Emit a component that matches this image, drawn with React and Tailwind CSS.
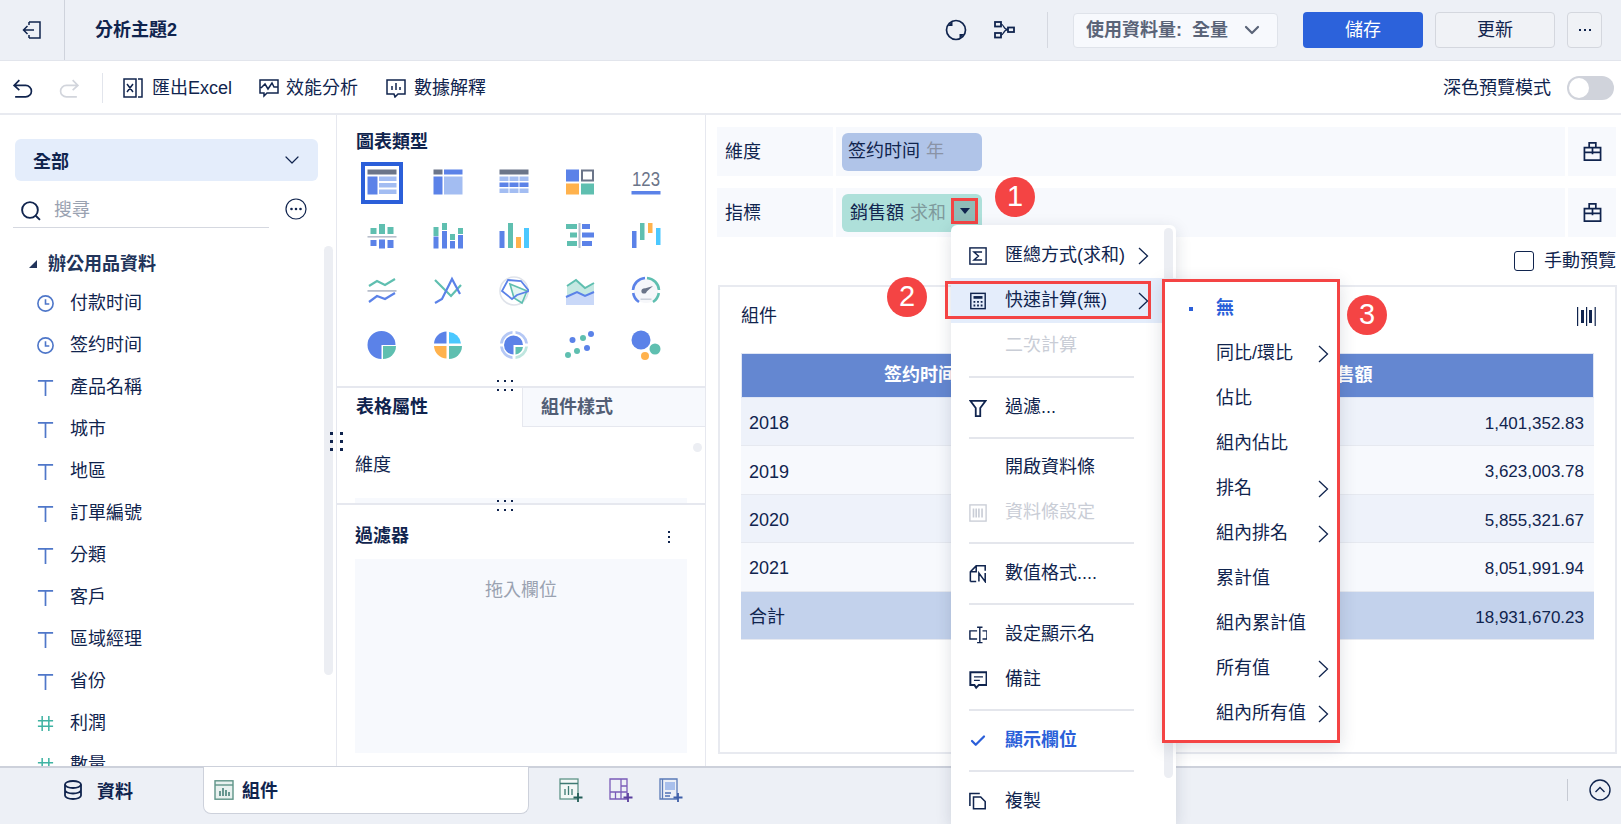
import { ChevronDown, Check } from 'lucide-react';

const B = '#5b82e8', T = '#5fbfb0', O = '#ffb24d', C = '#4bc8ff', G = '#6b7589', L = '#a3bdf2';

function R({ x, y, w, h, f }) {
  return <rect x={x} y={y} width={w} height={h} fill={f} />;
}

const chartIcons = [
  <><R x={0.5} y={1.5} w={29} h={5} f={G} /><R x={0.5} y={8.5} w={10} h={18} f={B} /><R x={12} y={8.5} w={17.5} h={4.5} f={L} /><R x={12} y={15} w={17.5} h={4.5} f={L} /><R x={12} y={21.5} w={17.5} h={4.5} f={L} /></>,
  <><R x={0.5} y={1.5} w={9} h={5} f={G} /><R x={11} y={1.5} w={18.5} h={5} f={B} /><R x={0.5} y={8.5} w={9} h={18} f={B} /><R x={11} y={8.5} w={18.5} h={18} f={L} /></>,
  <><R x={0.5} y={1.5} w={29} h={5} f={G} />{[8.5, 14.5, 20.5].map((y, i) => [0.5, 10.5, 20.5].map((x) => <R key={x + '-' + y} x={x} y={y} w={9} h={4.5} f={i === 1 ? B : L} />))}</>,
  <><R x={1} y={1.5} w={13} h={12} f={B} /><rect x={17} y={2.5} width={11} height={10} fill="none" stroke={G} strokeWidth="2" /><R x={1} y={15.5} w={13} h={11} f={O} /><R x={16} y={15.5} w={13} h={11} f={T} /></>,
  <><text x="1" y="18" textLength="28" lengthAdjust="spacingAndGlyphs" fontSize="21" fill={G} fontFamily="Liberation Sans, sans-serif">123</text><R x={0.5} y={23} w={29} h={3.5} f={B} /></>,
  <><R x={0.5} y={14} w={29} h={1.6} f="#b8bfcc" /><R x={3.5} y={6} w={6} h={6} f={T} /><R x={12} y={2} w={6} h={10} f={T} /><R x={20.5} y={5} w={6} h={7} f={T} /><R x={3.5} y={18} w={6} h={6} f={B} /><R x={12} y={17.5} w={6} h={9} f={B} /><R x={20.5} y={18} w={6} h={8} f={B} /></>,
  <><R x={0.5} y={5} w={5} h={9} f={T} /><R x={0.5} y={14.5} w={5} h={12} f={B} /><R x={9} y={1} w={5} h={7} f={T} /><R x={9} y={9} w={5} h={17.5} f={B} /><R x={17} y={12} w={5} h={6} f={T} /><R x={17} y={19} w={5} h={7.5} f={B} /><R x={25} y={6} w={5} h={6} f={T} /><R x={25} y={13} w={5} h={13.5} f={B} /></>,
  <><R x={0.5} y={9} w={5} h={17} f={B} /><R x={9} y={1} w={5} h={25} f={T} /><R x={17} y={15} w={5} h={11} f={O} /><R x={25} y={6} w={5} h={20} f={C} /></>,
  <><R x={13.5} y={1} w={2} h={25} f="#b8bfcc" /><R x={1} y={2} w={11} h={5} f={T} /><R x={5} y={10.5} w={7} h={5} f={T} /><R x={2} y={19} w={10} h={5} f={T} /><R x={17} y={2} w={8} h={5} f={B} /><R x={17} y={10.5} w={12} h={5} f={B} /><R x={17} y={19} w={10} h={5} f={B} /></>,
  <><R x={1} y={9} w={4.5} h={17} f={B} /><R x={9} y={1} w={4.5} h={17} f={T} /><R x={17} y={1} w={4.5} h={10} f={O} /><R x={25} y={6} w={4.5} h={17} f={C} /></>,
  <><path d="M2 10 L10 5 L18 9 L28 3" fill="none" stroke={T} strokeWidth="2.2" /><R x={0.5} y={14} w={29} h={1.8} f="#b8bfcc" /><path d="M2 26 L10 20 L18 23 L28 17" fill="none" stroke={B} strokeWidth="2.2" /></>,
  <><path d="M2 4 L18 20 L28 9" fill="none" stroke={T} strokeWidth="2.2" /><path d="M2 27 L9 23 L19 3 L27 18" fill="none" stroke={B} strokeWidth="2.2" /></>,
  <><circle cx="15" cy="15" r="14" fill="none" stroke="#dfe3ea" strokeWidth="1.6" /><path d="M11 8 L28 15 L23 27 L15 22 Z" fill="#e3f5f2" stroke={T} strokeWidth="1.6" /><path d="M9 4 L22 5 L30 15 L18 19 L13 23 L3 15 Z" fill="none" stroke={B} strokeWidth="1.8" /></>,
  <><path d="M2 10 L11 4 L20 12 L29 7 V16 L20 20 L12 16 L2 21 Z" fill="#c5e8e2" /><path d="M1 21 L12 16 L20 20 L29 16 V29 H1 Z" fill="#c9d8f8" /><path d="M2 10 L11 4 L20 12 L29 7" fill="none" stroke={T} strokeWidth="2" /><path d="M1 21 L12 16 L20 20 L29 16" fill="none" stroke={B} strokeWidth="2" /></>,
  <><circle cx="15" cy="15" r="12" fill="#f6f7fa" /><path d="M2 14 A13 13 0 0 1 14 2" fill="none" stroke={B} strokeWidth="2.6" /><path d="M16 2 A13 13 0 0 1 28 14" fill="none" stroke={T} strokeWidth="2.6" /><path d="M2.2 17 A13 13 0 0 0 8 26" fill="none" stroke={B} strokeWidth="2.6" /><path d="M27.8 17 A13 13 0 0 1 22 26" fill="none" stroke={T} strokeWidth="2.6" /><circle cx="13" cy="15" r="2.6" fill={G} /><path d="M12 13 L22 10 L14 17 Z" fill={G} /><R x={9.5} y={22.5} w={11} h={1.4} f="#c7ccd6" /></>,
  <><path d="M14 14 L28 14 A14 14 0 1 0 14 28 Z" fill={B} transform="translate(0.5 1)" /><path d="M16 16 H29 A13 13 0 0 1 16 29 Z" fill={T} /></>,
  <><path d="M13.5 1.5 A13 13 0 0 0 1 13.5 H13.5 Z" fill={B} /><path d="M16 2 A13 13 0 0 1 28 13.5 H16 Z" fill={C} /><path d="M1 16 H13.5 V28.5 A13 13 0 0 1 1 16 Z" fill={O} /><path d="M16 16 H29 A13 13 0 0 1 16 29 Z" fill={T} /></>,
  <><path d="M13.5 1 A14 14 0 0 0 1 13.5 H3.8 A11.2 11.2 0 0 1 13.5 3.8 Z M16.5 1 A14 14 0 0 1 29 13.5 H26.2 A11.2 11.2 0 0 0 16.5 3.8 Z M1 16.5 A14 14 0 0 0 13.5 29 V26.2 A11.2 11.2 0 0 1 3.8 16.5 Z" fill="#b5c8f5" /><path d="M16.5 29 A14 14 0 0 0 29 16.5 H26.2 A11.2 11.2 0 0 1 16.5 26.2 Z" fill="#bfe6df" /><path d="M14.5 15 H24 A9.5 9.5 0 1 0 14.5 24.5 Z" fill={B} /><path d="M16.5 17 H24 A8.5 8.5 0 0 1 16.5 24.5 Z" fill={T} /></>,
  <><circle cx="26" cy="4" r="3" fill={B} /><circle cx="18" cy="8" r="3" fill={T} /><circle cx="7.5" cy="10" r="3" fill={B} /><circle cx="22" cy="18" r="3" fill={B} /><circle cx="12" cy="21" r="3" fill={T} /><circle cx="3" cy="25" r="3" fill={T} /></>,
  <><circle cx="10" cy="10" r="9.5" fill={B} /><circle cx="24" cy="19" r="5.5" fill={T} /><circle cx="14" cy="26" r="4" fill={O} /></>,
];

function Outline({ size = 20, className = '', children, vb = '0 0 20 20', w = 1.5 }) {
  return (
    <svg width={size} height={size} viewBox={vb} fill="none" stroke="currentColor" strokeWidth={w} className={className}>
      {children}
    </svg>
  );
}

function Arrow({ className }) {
  return (
    <svg width="11" height="18" viewBox="0 0 11 18" fill="none" stroke="currentColor" strokeWidth="1.3" className={className}>
      <path d="M1 1 L9.5 9 L1 17" />
    </svg>
  );
}

function StructureIcon() {
  return (
    <svg width="21" height="18" viewBox="0 0 21 18" fill="none" stroke="currentColor" strokeWidth="1.8">
      <rect x="1" y="1" width="6" height="4.5" />
      <rect x="1" y="12" width="6" height="4.5" />
      <rect x="14" y="6.5" width="6" height="4.5" />
      <path d="M7 3 C10 3 9 8.7 14 8.7 C9 8.7 10 14 7 14" strokeWidth="1.2" />
    </svg>
  );
}

function TypeIcon({ kind }) {
  if (kind === 'clock') {
    return (
      <Outline size={19} className="text-[#4f77c9]" w={1.7}>
        <circle cx="10" cy="10" r="8" />
        <path d="M10 5.5 V10.5 H14" />
      </Outline>
    );
  }
  if (kind === 'text') {
    return (
      <Outline size={19} className="text-[#4f77c9]" w={1.8}>
        <path d="M2 3 H18 M10 3 V19" />
      </Outline>
    );
  }
  return (
    <Outline size={19} className="text-[#3fb3a3]" w={1.6}>
      <path d="M6.5 2 V18 M13.5 2 V18 M2 7 H18 M2 13 H18" />
    </Outline>
  );
}

const fields = [
  ['clock', '付款时间'], ['clock', '签约时间'], ['text', '產品名稱'], ['text', '城市'], ['text', '地區'], ['text', '訂單編號'],
  ['text', '分類'], ['text', '客戶'], ['text', '區域經理'], ['text', '省份'], ['num', '利潤'], ['num', '數量'],
];

function Sidebar() {
  return (
    <aside className="relative w-[337px] flex-none border-r border-[#e6e8ef] overflow-hidden pt-6">
      <div className="mx-[15px] h-[42px] w-[303px] rounded-md bg-[#e4edfb] flex items-center justify-between pl-[18px] pr-[14px]">
        <span className="font-bold pt-1">全部</span>
        <ChevronDown size={24} strokeWidth={1.2} />
      </div>
      <div className="flex items-center mt-[9px] pl-[13px]">
        <div className="flex items-center h-[38px] w-[256px] border-b border-[#d5d8e0] pl-[7px] pt-1">
          <Outline size={21} w={1.8}>
            <circle cx="9.5" cy="9.5" r="7.5" />
            <path d="M15 15 L19 19" />
          </Outline>
          <span className="ml-[13px] text-[#9aa2b1]">搜尋</span>
        </div>
        <svg width="22" height="22" viewBox="0 0 22 22" className="ml-[16px]" fill="none" stroke="currentColor" strokeWidth="1.2">
          <circle cx="11" cy="11" r="10" />
          <circle cx="6.5" cy="11" r="0.7" fill="currentColor" />
          <circle cx="11" cy="11" r="0.7" fill="currentColor" />
          <circle cx="15.5" cy="11" r="0.7" fill="currentColor" />
        </svg>
      </div>
      <div className="flex items-center h-9 mt-[18px] pl-[29px] font-bold text-[#22345a]">
        <span className="w-0 h-0 border-l-[8px] border-l-transparent border-b-[8px] border-b-[#22345a]" />
        <span className="ml-[11px]">辦公用品資料</span>
      </div>
      {fields.map(([kind, name]) => (
        <div key={name} className="flex items-center h-[42px] pl-[36px]">
          <TypeIcon kind={kind} />
          <span className="ml-[15px]">{name}</span>
        </div>
      ))}
      <div className="absolute left-[324px] top-[131px] w-[9px] h-[429px] rounded-md bg-[#eceef3]" />
    </aside>
  );
}

function GripDots({ className }) {
  return (
    <div className={'absolute grid grid-cols-3 gap-x-[5px] gap-y-[7px] ' + className}>
      {[0, 1, 2, 3, 4, 5].map((i) => <span key={i} className="block w-[2px] h-[2px] bg-[#10244e]" />)}
    </div>
  );
}

function MiddlePanel() {
  return (
    <section className="relative w-[369px] flex-none border-r border-[#e6e8ef] flex flex-col">
      <div className="h-[271px] flex-none">
        <h3 className="font-bold text-[#10244e] h-6 mt-[15px] ml-[19px] leading-6">圖表類型</h3>
        <div className="grid grid-cols-[repeat(5,66px)] auto-rows-[54px] mt-[2px] ml-[12px]">
          {chartIcons.map((icon, i) => (
            <div key={i} className="flex items-center justify-center">
              <div className={i === 0 ? 'w-[42px] h-[42px] border-4 border-[#2b5fd9] flex items-center justify-center' : 'flex items-center justify-center'}>
                <svg width="30" height="30" viewBox="0 0 30 30">{icon}</svg>
              </div>
            </div>
          ))}
        </div>
      </div>
      <div className="flex h-[41px] flex-none border-t-2 border-[#e6e8ef]">
        <div className="w-[185px] pl-[19px] flex items-center font-bold">表格屬性</div>
        <div className="flex-1 pl-[18px] flex items-center font-bold text-[#525e75] bg-[#f7f9fd] border-l border-b border-[#e6e8ef]">組件樣式</div>
      </div>
      <div className="relative h-[78px] flex-none px-[18px] border-b-2 border-[#e6e8ef]">
        <div className="pt-[26px] leading-6">維度</div>
        <div className="absolute left-[18px] right-[18px] bottom-0 h-[5px] bg-[#f7f9fd]" />
        <div className="absolute right-[3px] top-[16px] w-[9px] h-[9px] rounded-full bg-[#eceef3]" />
      </div>
      <div className="px-[18px] flex-1">
        <div className="flex items-center justify-between h-[54px] pt-[9px]">
          <span className="font-bold">過濾器</span>
          <span className="flex flex-col gap-[3px] mr-[17px]">
            {[0, 1, 2].map((i) => <span key={i} className="block w-[2px] h-[2px] bg-[#10244e]" />)}
          </span>
        </div>
        <div className="h-[194px] bg-[#f7f9fd] text-[#9aa2b1] text-center pt-[19px] leading-6">拖入欄位</div>
      </div>
      <GripDots className="left-[160px] top-[265px]" />
      <GripDots className="left-[160px] top-[385px]" />
    </section>
  );
}

function ShelfRow({ label, children }) {
  return (
    <div className="flex h-[49px] gap-[3px] pl-[11px] pr-[5px]">
      <div className="w-[116px] bg-[#f7f9fd] flex items-center pl-2 pt-[2px]">{label}</div>
      <div className="flex-1 bg-[#f7f9fd] flex items-center pl-[6px]">{children}</div>
      <div className="w-[48px] bg-[#f7f9fd] flex items-center justify-center">
        <Outline size={19} w={1.8}>
          <path d="M6.5 6 V1 H13.5 V6 M1.5 6 H18.5 V19 H1.5 Z M10 6 V13 M1.5 11 H18.5" />
        </Outline>
      </div>
    </div>
  );
}

const rows = [
  ['2018', '1,401,352.83', 'bg-[#eef2fa]'],
  ['2019', '3,623,003.78', 'bg-[#f7f9fd]'],
  ['2020', '5,855,321.67', 'bg-[#eef2fa]'],
  ['2021', '8,051,991.94', 'bg-[#f7f9fd]'],
  ['合計', '18,931,670.23', 'bg-[#c3d2ec]'],
];

function RightPanel() {
  return (
    <section className="flex-1 min-w-0 pt-3">
      <ShelfRow label="維度">
        <div className="w-[140px] h-[38px] rounded-md bg-[#b0c4e8] flex items-center pl-[6px]">
          签约时间<span className="ml-[6px] text-[#8a93a6]">年</span>
        </div>
      </ShelfRow>
      <div className="h-3" />
      <ShelfRow label="指標">
        <div className="w-[140px] h-[38px] rounded-md bg-[#aee0da] flex items-center pl-2 pt-[2px]">
          銷售額<span className="ml-[6px] text-[#7f9a9c]">求和</span>
        </div>
      </ShelfRow>
      <div className="flex items-center justify-end h-[48px] pr-[5px]">
        <span className="w-5 h-5 rounded-[3px] border border-[#10244e]" />
        <span className="ml-[10px]">手動預覽</span>
      </div>
      <div className="ml-3 mr-1 h-[469px] border-2 border-[#e8eaf0] px-[21px]">
        <div className="h-[66px] pb-2 flex items-center justify-between">
          <span>組件</span>
          <svg width="19" height="19" viewBox="0 0 19 19" fill="currentColor" className="mr-[-2px]">
            <rect x="0" y="0" width="1.2" height="19" />
            <rect x="4" y="3" width="3" height="13" />
            <rect x="9" y="0" width="1.2" height="19" />
            <rect x="12" y="3" width="3" height="13" />
            <rect x="17.6" y="0" width="1.2" height="19" />
          </svg>
        </div>
        <div className="grid grid-cols-[356px_1fr] h-[45px] bg-[#6487d1] text-white font-bold border border-[#dfe6f5]">
          <div className="flex items-center justify-center">签约时间</div>
          <div className="flex items-center justify-center">銷售額</div>
        </div>
        {rows.map(([year, value, bg]) => (
          <div key={year} className={'grid grid-cols-[356px_1fr] h-[48.4px] border-b border-[#e6e9f0] ' + bg}>
            <div className="flex items-center pl-2 pt-1">{year}</div>
            <div className="flex items-center justify-end pr-[10px] pt-1 text-[17px]">{value}</div>
          </div>
        ))}
      </div>
    </section>
  );
}

function MenuRow({ icon, label, arrow, muted, active, blue }) {
  return (
    <div className={'flex items-center h-[45px] pl-[18px] ' + (active ? 'bg-[#e4edfb] ' : '') + (muted ? 'text-[#c9cdd6] ' : '') + (blue ? 'text-[#2b5fd9] font-bold ' : '')}>
      <span className="w-[18px] h-[20px] flex items-center justify-center">{icon}</span>
      <span className="ml-[18px]">{label}</span>
      {arrow && <Arrow className="absolute left-[187px]" />}
    </div>
  );
}

function Sep({ h }) {
  return (
    <div className={'flex items-center pl-[18px] pr-[42px] ' + h}>
      <div className="w-full h-[2px] bg-[#e4e6ec]" />
    </div>
  );
}

function Menu() {
  return (
    <div className="absolute left-[951px] top-[225px] w-[225px] h-[599px] rounded-t-md bg-white shadow-[0_4px_16px_rgba(30,40,70,0.15)] pt-2 overflow-hidden">
      <MenuRow label="匯總方式(求和)" arrow icon={
        <Outline size={18} w={1.6}>
          <rect x="1" y="1" width="18" height="18" />
          <path d="M14.5 5.5 H5.5 L10.5 10 L5.5 14.5 H14.5" />
        </Outline>
      } />
      <MenuRow label="快速計算(無)" arrow active icon={
        <Outline size={18} w={1.6}>
          <rect x="2" y="1.5" width="16" height="17" />
          <path d="M5 6 H15" strokeWidth="3" />
          <path d="M5 11 H7 M9 11 H11 M13 11 H15 M5 15 H7 M9 15 H11 M13 15 H15" strokeWidth="2" />
        </Outline>
      } />
      <MenuRow label="二次計算" muted />
      <Sep h="h-[17px]" />
      <MenuRow label="過濾..." icon={
        <Outline size={18} w={2}>
          <path d="M1.5 2 H18.5 L12.5 10 V19 H7.5 V10 Z" />
        </Outline>
      } />
      <Sep h="h-[15px]" />
      <MenuRow label="開啟資料條" />
      <MenuRow label="資料條設定" muted icon={
        <Outline size={18}>
          <rect x="1" y="1" width="18" height="18" />
          <path d="M5 5 V15 M8 5 V15 M11 5 V15 M14.5 5 V15" strokeWidth="1.8" />
        </Outline>
      } />
      <Sep h="h-4" />
      <MenuRow label="數值格式...." icon={
        <Outline size={19} w={1.7}>
          <path d="M1.5 19 V8 L8 1.5 H18 V7 M1.5 19 H8 M8 1.5 V8 H1.5 M11 19 V9.5 L18 19 V9.5" />
        </Outline>
      } />
      <Sep h="h-4" />
      <MenuRow label="設定顯示名" icon={
        <Outline size={21} w={1.6}>
          <path d="M9 6 H1 V15 H9 M12 2 V19 M9 2 H15 M9 19 H15 M15 6 H20 V15 H15" />
        </Outline>
      } />
      <MenuRow label="備註" icon={
        <Outline size={21} w={2.2}>
          <path d="M1.5 2 H19.5 V16 H11 L8 19 L6 16 H1.5 Z" />
          <path d="M5.5 7 H15.5 M5.5 11 H12" strokeWidth="1.4" />
        </Outline>
      } />
      <Sep h="h-4" />
      <MenuRow label="顯示欄位" blue icon={<Check size={24} strokeWidth={3} />} />
      <Sep h="h-4" />
      <MenuRow label="複製" icon={
        <Outline size={19} w={1.7}>
          <path d="M1 15 V1 H12 M5 5 H13 L18 10 V18 H5 Z" />
        </Outline>
      } />
      <div className="absolute left-[213px] top-[3px] w-[9px] h-[550px] rounded-md bg-[#eceef3]" />
    </div>
  );
}

const subItems = [
  ['同比/環比', true], ['佔比', false], ['組內佔比', false], ['排名', true], ['組內排名', true],
  ['累計值', false], ['組內累計值', false], ['所有值', true], ['組內所有值', true],
];

function SubMenu() {
  return (
    <div className="absolute left-[1162px] top-[279px] w-[178px] h-[464px] bg-white border-[3px] border-[#f44444] shadow-[0_4px_16px_rgba(30,40,70,0.15)] pt-[4px]">
      <div className="flex items-center h-[45px] pl-[24px] text-[#2b5fd9] font-bold">
        <span className="w-1 h-1 bg-[#2b5fd9]" />
        <span className="ml-[23px]">無</span>
      </div>
      {subItems.map(([label, arrow]) => (
        <div key={label} className="relative flex items-center h-[45px] pl-[51px]">
          {label}
          {arrow && <Arrow className="absolute left-[153px]" />}
        </div>
      ))}
    </div>
  );
}

function Badge({ n, className }) {
  return (
    <div className={'absolute w-10 h-10 rounded-full bg-[#f44444] text-white flex items-center justify-center text-[29px] ' + className}>{n}</div>
  );
}

function BottomBar() {
  return (
    <footer className="relative h-[58px] flex-none bg-[#edf0f6] border-t-2 border-[#cdd1db] flex items-start">
      <div className="w-[203px] h-[44px] flex items-center pl-[63px] font-bold">
        <Outline size={20} w={1.8}>
          <ellipse cx="10" cy="4.5" rx="8" ry="3.5" />
          <path d="M2 4.5 V15.5 C2 17.5 5.5 19 10 19 C14.5 19 18 17.5 18 15.5 V4.5 M2 10 C2 12 5.5 13.5 10 13.5 C14.5 13.5 18 12 18 10" />
        </Outline>
        <span className="ml-[14px] pt-1">資料</span>
      </div>
      <div className="w-[326px] h-[47px] -mt-[1px] bg-white border-x border-b border-[#cdd1db] rounded-b-lg flex items-center pl-[10px] font-bold">
        <svg width="20" height="20" viewBox="0 0 20 20" fill="none">
          <rect x="1" y="0.8" width="18" height="18.4" fill="#e8f1ef" stroke="#5f9488" strokeWidth="1.4" />
          <path d="M1 5 H19" stroke="#5f9488" strokeWidth="1.4" />
          <path d="M6 16 V11 M9 16 V8 M12 16 V10 M15 16 V12" stroke="#3d7a72" strokeWidth="1.5" />
        </svg>
        <span className="ml-[8px] pt-[2px]">組件</span>
      </div>
      <div className="flex items-center h-[44px] ml-[30px] gap-[26px]">
        <svg width="24" height="24" viewBox="0 0 24 24" fill="none">
          <rect x="1" y="1" width="18" height="20" stroke="#5f9488" strokeWidth="1.3" fill="#f3f8f6" />
          <path d="M1 5.5 H19 M6 17 V11 M9.5 17 V8 M13 17 V11" stroke="#3d7a72" strokeWidth="1.3" />
          <path d="M19 15 V24 M14.5 19.5 H23.5" stroke="#245f58" strokeWidth="1.8" />
        </svg>
        <svg width="24" height="24" viewBox="0 0 24 24" fill="none">
          <path d="M1 1 H18 V21 H1 Z M12 1 V21 M1 14 H18 M12 8 H18 M6.5 14 V21" stroke="#7a5bb8" strokeWidth="1.3" />
          <path d="M19 15 V24 M14.5 19.5 H23.5" stroke="#5b3f9e" strokeWidth="1.8" />
        </svg>
        <svg width="24" height="24" viewBox="0 0 24 24" fill="none">
          <path d="M1 1 H18 V21 H1 Z M3.5 1 V21" stroke="#5a7ab8" strokeWidth="1.3" />
          <rect x="6" y="4" width="10" height="8" fill="#a9c0ec" />
          <path d="M6 15 H12 M6 18 H11" stroke="#4f70b5" strokeWidth="1.4" />
          <path d="M19 15 V24 M14.5 19.5 H23.5" stroke="#3f5fa8" strokeWidth="1.8" />
        </svg>
      </div>
      <div className="ml-auto flex items-center h-[44px]">
        <div className="w-px h-[22px] bg-[#c6cad3]" />
        <svg width="22" height="22" viewBox="0 0 22 22" fill="none" stroke="currentColor" strokeWidth="1.4" className="ml-[21px] mr-[10px]">
          <circle cx="11" cy="11" r="10" />
          <path d="M6.5 13 L11 8.5 L15.5 13" />
        </svg>
      </div>
    </footer>
  );
}

export default function App() {
  return (
    <div className="relative w-full h-screen overflow-hidden bg-white text-[#10244e] text-[18px] font-['Liberation_Sans','Noto_Sans_CJK_TC',sans-serif] flex flex-col">
      {/* Header */}
      <header className="h-[61px] flex-none bg-[#edf0f6] border-b border-[#e2e5ec] flex items-center">
        <div className="w-[65px] h-full border-r border-[#cfd3dc] flex items-center justify-center">
          <Outline size={20} w={1.5}>
            <path d="M7 2 H18 V18 H7 M7 2 V5 M7 15 V18 M12 10 H1.5 M5.5 6 L1.5 10 L5.5 14" />
          </Outline>
        </div>
        <div className="ml-[30px] font-bold text-[18px]">分析主題2</div>
        <div className="ml-auto flex items-center">
          <svg width="22" height="22" viewBox="0 0 22 22" fill="none" stroke="currentColor" strokeWidth="1.7">
            <circle cx="11" cy="11" r="9.5" />
            <path d="M7.5 2 V7 L3 7 Z" fill="currentColor" stroke="none" />
            <path d="M14.5 20 V15 L19 15 Z" fill="currentColor" stroke="none" />
          </svg>
          <span className="ml-[27px] flex"><StructureIcon /></span>
          <div className="ml-[32px] w-px h-9 bg-[#d5d8e0]" />
          <div className="ml-[25px] w-[205px] h-[35px] rounded bg-[#f7f9fd] border border-[#dfe3ea] flex items-center justify-between pl-3 pr-[13px] font-bold text-[#5a6478]">
            <span>使用資料量:&nbsp;&nbsp;全量</span>
            <ChevronDown size={24} strokeWidth={2.2} />
          </div>
          <button className="ml-[25px] w-[120px] h-9 rounded bg-[#2c62db] text-white">儲存</button>
          <button className="ml-3 w-[120px] h-9 rounded border border-[#d4d7de] bg-[#f0f2f6]">更新</button>
          <button className="ml-3 mr-[19px] w-[35px] h-9 rounded border border-[#d4d7de] bg-[#f0f2f6] flex items-center justify-center gap-[3px]">
            <span className="w-[2px] h-[2px] bg-[#10244e]" />
            <span className="w-[2px] h-[2px] bg-[#10244e]" />
            <span className="w-[2px] h-[2px] bg-[#10244e]" />
          </button>
        </div>
      </header>

      {/* Toolbar */}
      <div className="h-[54px] flex-none border-b-2 border-[#e8eaf0] flex items-center pt-[2px]">
        <span className="ml-[12px] flex">
          <Outline size={21} w={1.6}>
            <path d="M7 2 L2 7 L7 11.5 M2 7 H13 A5.5 5.5 0 0 1 13 18 H3" />
          </Outline>
        </span>
        <span className="ml-[26px] flex text-[#d2d5dc]">
          <Outline size={21} w={1.6}>
            <path d="M13 2 L18 7 L13 11.5 M18 7 H7 A5.5 5.5 0 0 0 7 18 H17" />
          </Outline>
        </span>
        <div className="ml-[22px] w-px h-[30px] bg-[#e2e5ec]" />
        <span className="ml-5 flex">
          <Outline size={20} w={1.5}>
            <path d="M1 1 H13 V19 H1 Z M15 1 H19 V19 H15 M4 6 L10 14 M10 6 L4 14" />
          </Outline>
        </span>
        <span className="ml-[9px]">匯出Excel</span>
        <span className="ml-[27px] flex">
          <Outline size={20} w={1.5}>
            <path d="M1 2 H19 V15 H8 L5 18 V15 H1 Z M2 10 L6 6 L9 11 L13 5 L15 9 H19" />
          </Outline>
        </span>
        <span className="ml-[7px]">效能分析</span>
        <span className="ml-[28px] flex">
          <Outline size={20} w={1.5}>
            <path d="M1 2 H19 V16 H12 L9 19 L8 16 H1 Z M6 12 V8 M10 12 V5 M14 12 V9" />
          </Outline>
        </span>
        <span className="ml-[8px]">數據解釋</span>
        <div className="ml-auto flex items-center mr-[7px]">
          <span>深色預覽模式</span>
          <div className="ml-4 w-[47px] h-6 rounded-full bg-[#d0d3db] flex items-center pl-[2px]">
            <span className="w-5 h-5 rounded-full bg-white" />
          </div>
        </div>
      </div>

      {/* Body */}
      <main className="flex-1 min-h-0 flex">
        <Sidebar />
        <MiddlePanel />
        <RightPanel />
      </main>

      <BottomBar />

      {/* Sidebar resize handle, sits across the border */}
      <div className="absolute left-[330px] top-[432px] grid grid-cols-2 gap-x-[7px] gap-y-[5px]">
        {[0, 1, 2, 3, 4, 5].map((i) => <span key={i} className="block w-[3px] h-[3px] bg-[#10244e]" />)}
      </div>

      {/* Field menu, overlaid */}
      <div className="absolute left-[951px] top-[198px] w-[27px] h-[26px] border-[3px] border-[#f44444] bg-[#8fbcb8] flex items-center justify-center">
        <span className="w-0 h-0 border-x-[5px] border-x-transparent border-t-[6px] border-t-[#10244e]" />
      </div>
      <Menu />
      <div className="absolute left-[945px] top-[281px] w-[206px] h-[38px] border-[3px] border-[#f44444]" />
      <SubMenu />
      <Badge n="1" className="left-[995px] top-[177px]" />
      <Badge n="2" className="left-[887px] top-[277px]" />
      <Badge n="3" className="left-[1347px] top-[295px]" />
    </div>
  );
}
